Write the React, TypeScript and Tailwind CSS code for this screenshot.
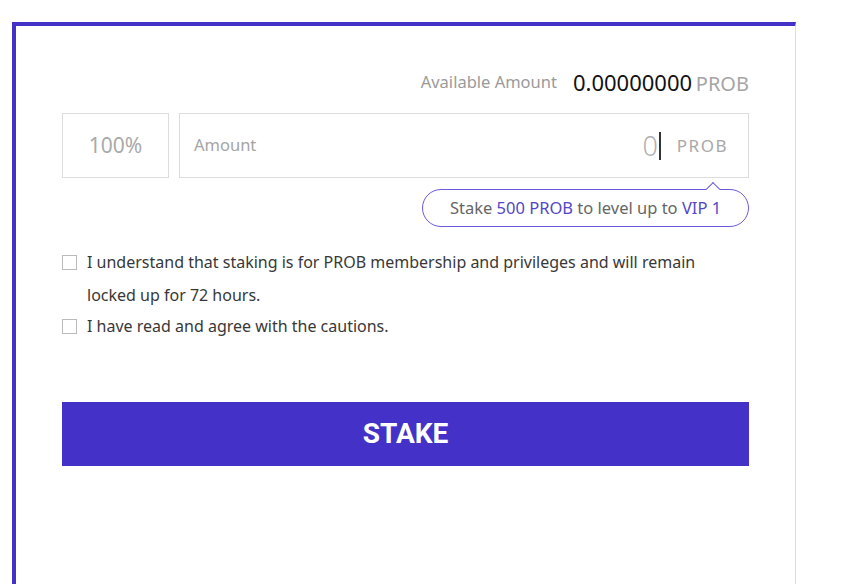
import { useState } from "react";

const App = () => {
  const [agreeLock, setAgreeLock] = useState(false);
  const [agreeCaution, setAgreeCaution] = useState(false);

  return (
    <div className="min-h-screen w-full bg-white pt-[22px] pl-[12px] font-['Noto_Sans','Open_Sans',sans-serif]">
      <div className="w-[784px] h-[562px] border-t-4 border-l-4 border-t-[#4432c8] border-l-[#4432c8] border-r border-r-[#dddddd] bg-white px-[46px] pt-[44px]">
        {/* available amount */}
        <div className="flex items-center justify-end h-[24px] gap-[16px]">
          <span className="text-[16.5px] text-[#9a9a9a]">Available Amount</span>
          <span className="text-[22px] text-[#111111] leading-none">
            0.00000000 <span className="text-[20px] text-[#a5a5a5] -ml-[2px]">PROB</span>
          </span>
        </div>

        {/* inputs */}
        <div className="flex gap-[10px] mt-[19px]">
          <div className="w-[107px] h-[65px] border border-[#dddddd] flex items-center justify-center text-[21px] text-[#aaaaaa]">
            100%
          </div>
          <div className="flex-1 h-[65px] border border-[#dddddd] flex items-center pl-[14px] pr-[20px]">
            <span className="text-[16.5px] text-[#a5a5a5]">Amount</span>
            <div className="flex-1" />
            <span className="text-[27px] text-[#b0b0b0] font-light leading-none">0</span>
            <span className="w-[2px] h-[28px] bg-[#333333] ml-[1px]" />
            <span className="ml-[16px] text-[17px] tracking-[1.5px] text-[#a8a8a8]">PROB</span>
          </div>
        </div>

        {/* tooltip */}
        <div className="flex justify-end mt-[11px]">
          <div className="relative w-[327px] h-[38px] rounded-full border border-[#6a5ae0] bg-white flex items-center justify-center text-[16.5px] text-[#666666]">
            <span className="absolute -top-[6px] right-[30px] w-[10px] h-[10px] rotate-45 bg-white border-t border-l border-[#6a5ae0]" />
            <span className="relative">
              Stake <span className="text-[#5446c8]">500 PROB</span> to level up to{" "}
              <span className="text-[#5446c8]">VIP 1</span>
            </span>
          </div>
        </div>

        {/* agreements */}
        <div className="mt-[19px] flex flex-col text-[16px] text-[#383838] leading-[33px]">
          <label className="flex items-start gap-[10px] cursor-pointer">
            <input
              type="checkbox"
              checked={agreeLock}
              onChange={(e) => setAgreeLock(e.target.checked)}
              className="appearance-none mt-[9px] w-[15px] h-[15px] border border-[#bbbbbb] bg-white shrink-0 checked:bg-[#4432c8]"
            />
            <span>
              I understand that staking is for PROB membership and privileges and will remain
              <br />
              locked up for 72 hours.
            </span>
          </label>
          <label className="flex items-start gap-[10px] -mt-[2px] cursor-pointer">
            <input
              type="checkbox"
              checked={agreeCaution}
              onChange={(e) => setAgreeCaution(e.target.checked)}
              className="appearance-none mt-[9px] w-[15px] h-[15px] border border-[#bbbbbb] bg-white shrink-0 checked:bg-[#4432c8]"
            />
            <span>I have read and agree with the cautions.</span>
          </label>
        </div>

        {/* button */}
        <button className="mt-[59px] w-full h-[64px] bg-[#4432c8] text-white text-[28px] font-bold font-['Roboto',sans-serif]">
          STAKE
        </button>
      </div>
    </div>
  );
};

export default App;
